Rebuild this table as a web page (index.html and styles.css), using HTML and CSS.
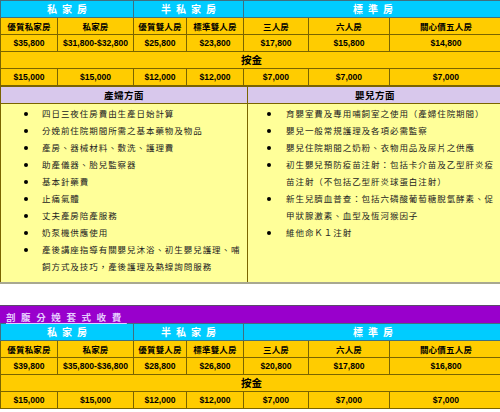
FILE: index.html
```html
<!DOCTYPE html>
<html lang="zh-Hant">
<head>
<meta charset="utf-8">
<title>收費</title>
<link rel="stylesheet" href="styles.css">
</head>
<body>
<div class="page">
  <table class="fees">
    <colgroup>
      <col class="c1"><col class="c2"><col class="c3"><col class="c4"><col class="c5"><col class="c6"><col class="c7">
    </colgroup>
    <tr class="head">
      <th colspan="2">私家房</th>
      <th colspan="2">半私家房</th>
      <th colspan="3">標準房</th>
    </tr>
    <tr class="labels">
      <th>優質私家房</th><th>私家房</th><th>優質雙人房</th><th>標準雙人房</th><th>三人房</th><th>六人房</th><th>關心價五人房</th>
    </tr>
    <tr class="prices">
      <td>$35,800</td><td>$31,800-$32,800</td><td>$25,800</td><td>$23,800</td><td>$17,800</td><td>$15,800</td><td>$14,800</td>
    </tr>
    <tr class="deposit-title"><td colspan="7">按金</td></tr>
    <tr class="prices">
      <td>$15,000</td><td>$15,000</td><td>$12,000</td><td>$12,000</td><td>$7,000</td><td>$7,000</td><td>$7,000</td>
    </tr>
  </table>

  <table class="details">
    <colgroup><col class="dl"><col class="dr"></colgroup>
    <tr class="dhead"><th>產婦方面</th><th>嬰兒方面</th></tr>
    <tr class="dbody">
      <td>
        <ul class="list list-left">
          <li>四日三夜住房費由生產日始計算</li>
          <li>分娩前住院期間所需之基本藥物及物品</li>
          <li>產房、器械材料、敷洗、護理費</li>
          <li>助產儀器、胎兒監察器</li>
          <li>基本針藥費</li>
          <li>止痛氣體</li>
          <li>丈夫產房陪產服務</li>
          <li>奶泵機供應使用</li>
          <li>產後講座指導有關嬰兒沐浴、初生嬰兒護理、哺<br>飼方式及技巧，產後護理及熱線詢問服務</li>
        </ul>
      </td>
      <td>
        <ul class="list list-right">
          <li>育嬰室費及專用哺飼室之使用（產婦住院期間）</li>
          <li>嬰兒一般常規護理及各項必需監察</li>
          <li>嬰兒住院期間之奶粉、衣物用品及尿片之供應</li>
          <li>初生嬰兒預防疫苗注射：包括卡介苗及乙型肝炎疫<br>苗注射（不包括乙型肝炎球蛋白注射）</li>
          <li>新生兒臍血普查：包括六磷酸葡萄糖脫氫酵素、促<br>甲狀腺激素、血型及恆河猴因子</li>
          <li>維他命Ｋ１注射</li>
        </ul>
      </td>
    </tr>
  </table>

  <div class="gap"></div>

  <div class="title-bar"><span class="title-text">剖腹分娩套式收費</span></div>

  <table class="fees">
    <colgroup>
      <col class="c1"><col class="c2"><col class="c3"><col class="c4"><col class="c5"><col class="c6"><col class="c7">
    </colgroup>
    <tr class="head">
      <th colspan="2">私家房</th>
      <th colspan="2">半私家房</th>
      <th colspan="3">標準房</th>
    </tr>
    <tr class="labels">
      <th>優質私家房</th><th>私家房</th><th>優質雙人房</th><th>標準雙人房</th><th>三人房</th><th>六人房</th><th>關心價五人房</th>
    </tr>
    <tr class="prices">
      <td>$39,800</td><td>$35,800-$36,800</td><td>$28,800</td><td>$26,800</td><td>$20,800</td><td>$17,800</td><td>$16,800</td>
    </tr>
    <tr class="deposit-title"><td colspan="7">按金</td></tr>
    <tr class="prices">
      <td>$15,000</td><td>$15,000</td><td>$12,000</td><td>$12,000</td><td>$7,000</td><td>$7,000</td><td>$7,000</td>
    </tr>
  </table>
</div>
</body>
</html>
```

FILE: styles.css
```css
html, body {
  margin: 0;
  padding: 0;
  background: #ffffff;
}

body {
  font-family: "Noto Sans CJK TC", "Liberation Sans", sans-serif;
  color: #000;
}

.page {
  width: 502px;
}

table {
  border-collapse: collapse;
  table-layout: fixed;
  width: 502px;
}

.c1 { width: 57px; }
.c2 { width: 76px; }
.c3 { width: 53px; }
.c4 { width: 57px; }
.c5 { width: 65px; }
.c6 { width: 81px; }
.c7 { width: 113px; }

.fees th,
.fees td {
  border: 1px solid #7a6400;
  padding: 0;
  height: 16px;
  line-height: 16px;
  text-align: center;
  white-space: nowrap;
  overflow: hidden;
}

.fees .head th {
  background: #00ccff;
  color: #ffffff;
  font-size: 10px;
  font-weight: 700;
  letter-spacing: 5px;
  text-indent: 5px;
  border-color: #3f6f80;
}

.fees .labels th {
  background: #ffcc00;
  font-size: 8.5px;
  font-weight: 700;
  letter-spacing: 0.2px;
}

.fees .prices td {
  background: #ffcc00;
  font-family: "Liberation Sans", Arial, sans-serif;
  font-size: 8.6px;
  font-weight: 700;
}

.fees .deposit-title td {
  background: #ffcc00;
  font-size: 10.5px;
  font-weight: 700;
}

.dl { width: 247px; }
.dr { width: 255px; }

.details th,
.details td {
  border: 1px solid #7a6400;
  padding: 0;
}

.details .dhead th {
  background: #d8c8ec;
  height: 16px;
  line-height: 16px;
  font-size: 9.5px;
  font-weight: 700;
  letter-spacing: 0.5px;
}

.details .dbody td {
  background: #ffff99;
  height: 178px;
  vertical-align: top;
  border-bottom: 2px solid #a8a890;
}

.list {
  list-style: none;
  margin: 0;
  padding: 1px 0 0 0;
  font-size: 8.5px;
  line-height: 17px;
  letter-spacing: 0.95px;
  color: #222;
}

.list li {
  display: flex;
  align-items: flex-start;
}

.list li::before {
  content: "";
  flex: none;
  width: 4px;
  height: 4px;
  border-radius: 50%;
  background: #000;
  margin-top: 7px;
}

.list-left li::before {
  margin-left: 23px;
  margin-right: 14px;
}

.list-right li::before {
  margin-left: 19px;
  margin-right: 15px;
}

.gap {
  height: 21px;
}

.title-bar {
  background: #9900cc;
  border-top: 1px solid #5a4a6a;
  height: 17px;
  line-height: 17px;
  padding-left: 6px;
}

.title-text {
  color: #e6ccff;
  font-size: 9.5px;
  font-weight: 700;
  letter-spacing: 5.6px;
  text-decoration: underline;
  text-underline-offset: 2px;
}
```
